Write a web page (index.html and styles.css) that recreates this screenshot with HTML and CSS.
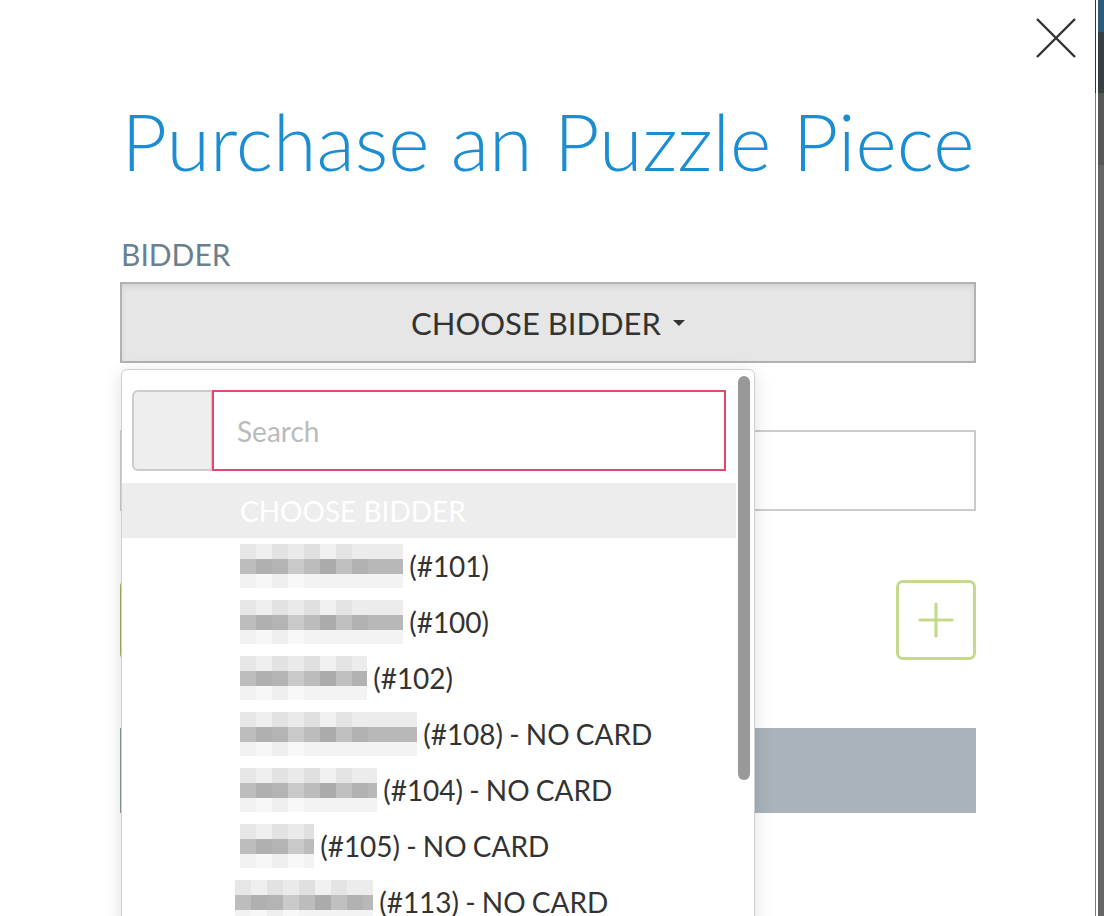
FILE: index.html
```html
<!DOCTYPE html>
<html>

<head>
    <meta charset="UTF-8">
    <title>Purchase an Puzzle Piece</title>
    <meta name="viewport" content="width=device-width,initial-scale=1" />
    <link rel="stylesheet" href="styles.css">
</head>

<body>

    <div class="modal">
        <a class="modal-close" href="#">
            <svg width="40" height="40" viewBox="0 0 40 40">
                <path d="M1 1 L39 39 M39 1 L1 39" stroke="#333" stroke-width="2.4" fill="none" />
            </svg>
        </a>

        <div class="modal-content">
            <h1 class="modal-title">Purchase an Puzzle Piece</h1>

            <label class="field-label">BIDDER</label>
            <div class="select-box">
                <div class="select-toggle">CHOOSE BIDDER <span class="caret"></span></div>

                <div class="select-menu">
                    <div class="menu-body">
                        <div class="search-group">
                            <span class="search-addon"></span>
                            <input class="search-input" type="text" placeholder="Search">
                        </div>
                        <ul class="option-list">
                            <li class="option disabled">CHOOSE BIDDER</li>
                            <li class="option"><span class="blur b1"></span> (#101)</li>
                            <li class="option"><span class="blur b1"></span> (#100)</li>
                            <li class="option"><span class="blur b3"></span> (#102)</li>
                            <li class="option"><span class="blur b4"></span> (#108) - NO CARD</li>
                            <li class="option"><span class="blur b5"></span> (#104) - NO CARD</li>
                            <li class="option"><span class="blur b6"></span> (#105) - NO CARD</li>
                            <li class="option"><span class="blur b7"></span> (#113) - NO CARD</li>
                        </ul>
                    </div>
                    <div class="menu-track">
                        <div class="menu-thumb"></div>
                    </div>
                </div>
            </div>

            <div class="field-amount">
                <input class="text-input" type="text" aria-label="Amount">
            </div>

            <div class="action-row">
                <button class="btn-green" aria-label="Add"></button>
                <button class="btn-plus" aria-label="New bidder">
                    <svg width="36" height="36" viewBox="0 0 36 36">
                        <path d="M18 2 V34 M2 18 H34" stroke="#c5d98b" stroke-width="3.2" stroke-linecap="round" fill="none" />
                    </svg>
                </button>
            </div>

            <button class="btn-submit" aria-label="Purchase"></button>
        </div>
    </div>

    <div class="edge"></div>
    <div class="rail"></div>

</body>

</html>
```

FILE: styles.css
```css
html,
body {
    height: 100%;
    overflow: hidden;
}

body {
    margin: 0;
    display: flex;
    background: #fff;
    font-family: Lato, "Liberation Sans", sans-serif;
    color: #333;
}

ul,
li,
div,
span,
input,
button {
    box-sizing: border-box;
}

.modal {
    flex: 1;
    position: relative;
}

.edge {
    width: 1px;
    background: linear-gradient(#333 0 93px, #7a7a7a 93px);
}

.rail {
    width: 6px;
    margin-left: 2px;
    background: linear-gradient(#2c5c79 0 32px, #393e41 32px 93px, #575757 93px 165px, #666 165px);
}

.modal-close {
    position: absolute;
    top: 18px;
    right: 19px;
    width: 40px;
    height: 40px;
}

.modal-close svg {
    display: block;
}

.modal-content {
    width: 856px;
    margin-left: 120px;
    padding-top: 92px;
}

.modal-title {
    margin: 0;
    font-size: 79px;
    line-height: 98px;
    font-weight: 300;
    color: #1b8dd3;
    text-align: center;
    white-space: nowrap;
}

.field-label {
    display: block;
    font-size: 30px;
    line-height: 36px;
    color: #6b7f8d;
    padding-left: 1px;
    margin-top: 46px;
    margin-bottom: 10px;
}

/* select */
.select-box {
    position: relative;
}

.select-toggle {
    height: 81px;
    border: 2px solid #b2b2b2;
    background: #e6e6e6;
    box-shadow: inset 0 3px 5px rgba(0, 0, 0, .08);
    display: flex;
    align-items: center;
    justify-content: center;
    font-size: 31px;
    color: #333;
}

.caret {
    display: inline-block;
    width: 0;
    height: 0;
    margin-left: 12px;
    border-left: 6px solid transparent;
    border-right: 6px solid transparent;
    border-top: 6px solid #333;
}

.select-menu {
    position: absolute;
    top: calc(100% + 6px);
    left: 1px;
    width: 634px;
    height: 560px;
    display: flex;
    background: #fff;
    border: 1px solid #cfcfcf;
    border-radius: 6px;
    box-shadow: 0 4px 18px rgba(0, 0, 0, .13);
    z-index: 10;
}

.menu-body {
    flex: 1;
    padding-top: 20px;
}

.menu-track {
    width: 18px;
    padding: 6px 0 0 2px;
}

.menu-thumb {
    width: 12px;
    height: 404px;
    border-radius: 6px;
    background: #999;
}

.search-group {
    display: flex;
    height: 81px;
    margin: 0 10px 12px 10px;
}

.search-addon {
    width: 81px;
    background: #eee;
    border: 2px solid #ccc;
    border-radius: 6px 0 0 6px;
}

.search-input {
    flex: 1;
    margin-left: -1px;
    border: 2px solid #e3496e;
    padding: 0 0 0 23px;
    font-family: inherit;
    font-size: 28px;
    color: #333;
    outline: none;
}

.search-input::placeholder {
    color: #bbb;
}

.option-list {
    list-style-type: none;
    margin: 0;
    padding: 0;
}

.option {
    display: flex;
    align-items: center;
    height: 56px;
    padding-left: 118px;
    font-size: 28px;
    color: #333;
    white-space: pre;
    word-spacing: -1px;
}

.option.disabled {
    background: #ededed;
    color: #fff;
    height: 55px;
    word-spacing: 0;
}

/* pixelated names */
.blur {
    display: inline-block;
    height: 44px;
    background:
        linear-gradient(90deg, #e6e6e6 0 16px, #efefef 16px 32px, #e2e2e2 32px 48px, #eaeaea 48px 64px, #e0e0e0 64px 80px, #f0f0f0 80px 96px, #e4e4e4 96px 112px, #ececec 112px) 0 0 / 100% 15px no-repeat,
        linear-gradient(90deg, #bdbdbd 0 16px, #b0b0b0 16px 32px, #b4b4b4 32px 48px, #cacaca 48px 64px, #bcbcbc 64px 80px, #ababab 80px 96px, #c0c0c0 96px 112px, #b2b2b2 112px 128px, #b8b8b8 128px) 0 15px / 100% 15px no-repeat,
        linear-gradient(90deg, #f2f2f2 0 16px, #f7f7f7 16px 32px, #efefef 32px 48px, #f8f8f8 48px 64px, #f3f3f3 64px) 0 30px / 100% 14px no-repeat;
}

.b1 { width: 163px; }
.b3 { width: 127px; }
.b4 { width: 177px; }
.b5 { width: 137px; }
.b6 { width: 74px; }
.b7 { width: 138px; margin-left: -5px; }

/* form behind menu */
.field-amount {
    margin-top: 67px;
}

.text-input {
    display: block;
    width: 100%;
    height: 81px;
    border: 2px solid #ccc;
    font-size: 28px;
}

.action-row {
    display: flex;
    justify-content: space-between;
    margin-top: 69px;
}

.btn-green {
    width: 560px;
    height: 80px;
    border: 1px solid #9fb06b;
    border-radius: 6px;
    background: #b3c778;
}

.btn-plus {
    width: 80px;
    height: 80px;
    padding: 0;
    border: 3px solid #c5d98b;
    border-radius: 7px;
    background: #fff;
    display: flex;
    align-items: center;
    justify-content: center;
}

.btn-submit {
    display: block;
    width: 100%;
    height: 85px;
    margin-top: 68px;
    border: 0;
    border-left: 1px solid #8a969d;
    background: #a9b3b9;
}
```
